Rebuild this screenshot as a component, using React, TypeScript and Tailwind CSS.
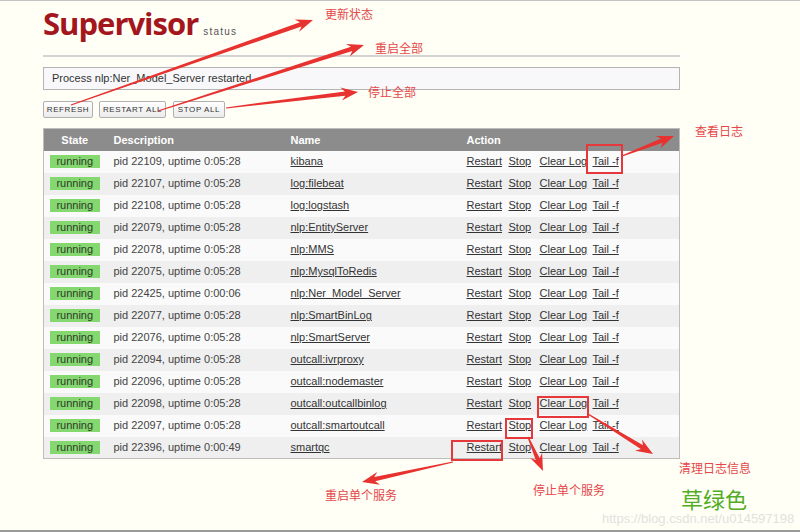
import React from "react";

type Proc = { name: string; pid: number; uptime: string };

const procs: Proc[] = [
  { name: "kibana", pid: 22109, uptime: "0:05:28" },
  { name: "log:filebeat", pid: 22107, uptime: "0:05:28" },
  { name: "log:logstash", pid: 22108, uptime: "0:05:28" },
  { name: "nlp:EntityServer", pid: 22079, uptime: "0:05:28" },
  { name: "nlp:MMS", pid: 22078, uptime: "0:05:28" },
  { name: "nlp:MysqlToRedis", pid: 22075, uptime: "0:05:28" },
  { name: "nlp:Ner_Model_Server", pid: 22425, uptime: "0:00:06" },
  { name: "nlp:SmartBinLog", pid: 22077, uptime: "0:05:28" },
  { name: "nlp:SmartServer", pid: 22076, uptime: "0:05:28" },
  { name: "outcall:ivrproxy", pid: 22094, uptime: "0:05:28" },
  { name: "outcall:nodemaster", pid: 22096, uptime: "0:05:28" },
  { name: "outcall:outcallbinlog", pid: 22098, uptime: "0:05:28" },
  { name: "outcall:smartoutcall", pid: 22097, uptime: "0:05:28" },
  { name: "smartqc", pid: 22396, uptime: "0:00:49" },
];

// tapered annotation arrow, thin at the tail, head at (x2, y2)
function arrowPoints(x1: number, y1: number, x2: number, y2: number) {
  const dx = x2 - x1;
  const dy = y2 - y1;
  const len = Math.hypot(dx, dy);
  const ux = dx / len;
  const uy = dy / len;
  const nx = -uy;
  const ny = ux;
  const head = 17;
  const bx = x2 - ux * head;
  const by = y2 - uy * head;
  const nb = x2 - ux * (head - 4);
  const nby = y2 - uy * (head - 4);
  const pts = [
    [x1 + nx * 0.6, y1 + ny * 0.6],
    [nb + nx * 2.2, nby + ny * 2.2],
    [bx + nx * 6.5, by + ny * 6.5],
    [x2, y2],
    [bx - nx * 6.5, by - ny * 6.5],
    [nb - nx * 2.2, nby - ny * 2.2],
    [x1 - nx * 0.6, y1 - ny * 0.6],
  ];
  return pts.map((p) => p.join(",")).join(" ");
}

const arrows: [number, number, number, number][] = [
  [71, 104, 313, 19],
  [158, 110, 364, 44],
  [226, 107, 358, 91],
  [622, 155, 674, 135],
  [588, 413, 653, 453],
  [528, 436, 543, 470],
  [453, 461, 362, 481],
];

const boxes = [
  { x: 587, y: 144, w: 35, h: 28 },
  { x: 538, y: 396, w: 50, h: 20 },
  { x: 506, y: 418, w: 26, h: 19 },
  { x: 452, y: 440, w: 50, h: 19 },
];

function Annotations() {
  return (
    <svg className="absolute inset-0 pointer-events-none" width={800} height={532}>
      {boxes.map((b, i) => (
        <rect key={i} x={b.x} y={b.y} width={b.w} height={b.h} fill="none" stroke="#e6373a" strokeWidth={2} />
      ))}
      {arrows.map((a, i) => (
        <polygon key={i} points={arrowPoints(...a)} fill="#e8322f" />
      ))}
    </svg>
  );
}

function Label({ className, children }: { className: string; children: React.ReactNode }) {
  return (
    <div
      className={`absolute text-[12px] leading-[16px] text-[#e4474a] ${className}`}
      style={{ fontFamily: '"Noto Sans CJK SC", "Noto Sans", sans-serif' }}
    >
      {children}
    </div>
  );
}

function Btn({ className, children }: { className: string; children: React.ReactNode }) {
  return (
    <button
      className={`h-[17px] px-0 whitespace-nowrap border border-[#b0b0b0] rounded-[2px] bg-gradient-to-b from-white to-[#ebebeb] text-[8px] tracking-[0.6px] text-[#333] ${className}`}
    >
      {children}
    </button>
  );
}

export default function App() {
  return (
    <div
      className="relative w-[800px] h-[532px] overflow-hidden bg-[#fffff6] border-t border-[#c4c4c4]"
      style={{ fontFamily: '"Liberation Sans", Arial, sans-serif' }}
    >
      <div className="pl-[43px] w-[680px]">
        <div className="flex items-baseline pt-[7px]">
          <span
            className="text-[31px] leading-none font-bold text-[#a3161d] tracking-[-1px]"
            style={{ fontFamily: '"Open Sans", sans-serif' }}
          >
            Supervisor
          </span>
          <span className="ml-[5px] text-[10px] tracking-[1.2px] text-[#555]">status</span>
        </div>
        <div className="mt-[16px] h-[2px] bg-[#d3d3d3]" />
        <div className="mt-[10px] h-[23px] flex items-center pl-[8px] border border-[#b4b4b4] bg-[#f8f8fa] text-[11px] text-[#333]">
          Process nlp:Ner_Model_Server restarted
        </div>
        <div className="mt-[11px] flex">
          <Btn className="w-[50px]">REFRESH</Btn>
          <Btn className="ml-[6px] w-[67px]">RESTART ALL</Btn>
          <Btn className="ml-[7px] w-[52px]">STOP ALL</Btn>
        </div>
        <table className="mt-[10px] w-[637px] border-collapse border border-[#bdbdbd] text-[11px] table-fixed">
          <colgroup>
            <col className="w-[62px]" />
            <col className="w-[177px]" />
            <col className="w-[176px]" />
            <col />
          </colgroup>
          <thead>
            <tr className="h-[22px] bg-[#8c8c8c] text-white font-bold text-left">
              <th className="text-center font-bold">State</th>
              <th className="pl-[8px] font-bold">Description</th>
              <th className="pl-[8px] font-bold">Name</th>
              <th className="pl-[8px] font-bold">Action</th>
            </tr>
          </thead>
          <tbody>
            {procs.map((p, i) => (
              <tr key={p.name} className={`h-[22px] ${i % 2 === 0 ? "bg-[#fafafa]" : "bg-[#efefef]"}`}>
                <td className="text-center">
                  <span className="inline-block w-[50px] h-[13px] leading-[13px] bg-[#84d86f] text-[#2f3a2a]">
                    running
                  </span>
                </td>
                <td className="pl-[8px] text-[#444]">
                  pid {p.pid}, uptime {p.uptime}
                </td>
                <td className="pl-[8px]">
                  <span className="underline text-[#333]">{p.name}</span>
                </td>
                <td className="pl-[8px] text-[#333] whitespace-nowrap">
                  <span className="inline-block w-[42px] underline">Restart</span>
                  <span className="inline-block w-[31px] underline">Stop</span>
                  <span className="inline-block w-[53px] underline">Clear Log</span>
                  <span className="underline">Tail -f</span>
                </td>
              </tr>
            ))}
          </tbody>
        </table>
      </div>

      <Annotations />
      <Label className="left-[325px] top-[5px]">更新状态</Label>
      <Label className="left-[375px] top-[39px]">重启全部</Label>
      <Label className="left-[368px] top-[83px]">停止全部</Label>
      <Label className="left-[695px] top-[122px]">查看日志</Label>
      <Label className="left-[679px] top-[459px]">清理日志信息</Label>
      <Label className="left-[533px] top-[481px]">停止单个服务</Label>
      <Label className="left-[325px] top-[486px]">重启单个服务</Label>
      <div
        className="absolute left-[681px] top-[483px] text-[22px] leading-[28px] text-[#52ad25]"
        style={{ fontFamily: '"Noto Sans CJK SC", sans-serif' }}
      >
        草绿色
      </div>
      <div className="absolute left-[602px] top-[510px] text-[13px] leading-[16px] text-[#e2e2dc]">
        https://blog.csdn.net/u014597198
      </div>
      <div className="absolute left-0 right-0 bottom-0 h-[2px] bg-[#9a9a9a]" />
    </div>
  );
}
